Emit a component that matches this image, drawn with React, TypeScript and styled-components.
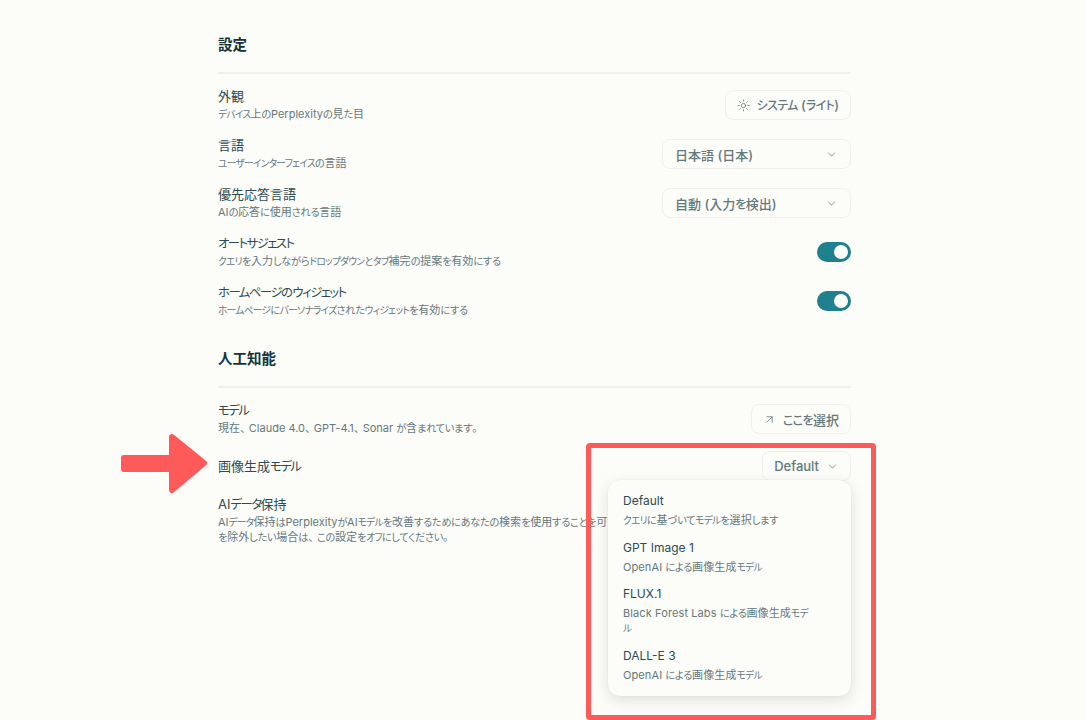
import React from "react"
import styled, { createGlobalStyle } from "styled-components"
import { ArrowUpRight, ChevronDown, Sun } from "lucide-react"

const GlobalStyle = createGlobalStyle`
    html, body {
        margin: 0;
        padding: 0;
        background: #fcfcf9;
    }
    * {
        box-sizing: border-box;
    }
`

const colors = {
    bg: "#fcfcf9",
    title: "#13343b",
    text: "#2e4a50",
    sub: "#64787c",
    line: "#f0f0ec",
    teal: "#20808d",
    red: "#ff5a5a",
}

const Root = styled.div`
    position: relative;
    width: 1085px;
    height: 720px;
    overflow: hidden;
    background: ${colors.bg};
    font-family: Inter, "Noto Sans CJK JP", sans-serif;
    font-feature-settings: "palt";
    padding: 34px 234px 0 218px;
`

const Katakana = styled.span`
    line-height: 1;
    font-size: var(--kana-size, 0.88em);
    letter-spacing: var(--kana, -0.07em);
`

const Hiragana = styled.span`
    line-height: 1;
    font-size: var(--hira-size, 0.93em);
    letter-spacing: var(--hira, -0.03em);
`

const Punct = styled.span`
    font-feature-settings: normal;
    letter-spacing: -0.2em;
`

// the kana of the page's font are much narrower than Noto's, so shrink the runs
const Jp = ({ children }: { children: string }) => (
    <>
        {children.split(/([\u30a0-\u30ff]+|[\u3040-\u309f]+|[、。]+)/).map((part, i) => {
            if (/^[\u30a0-\u30ff]/.test(part)) return <Katakana key={i}>{part}</Katakana>
            if (/^[\u3040-\u309f]/.test(part)) return <Hiragana key={i}>{part}</Hiragana>
            if (/^[、。]/.test(part)) return <Punct key={i}>{part}</Punct>
            return part
        })}
    </>
)

const Section = styled.section`
    margin-bottom: 30px;
`

const SectionTitle = styled.h2`
    margin: 0;
    height: 40px;
    padding-bottom: 17px;
    border-bottom: 2px solid ${colors.line};
    font-size: 14.5px;
    line-height: 22px;
    font-weight: 600;
    color: ${colors.title};
`

const Rows = styled.div`
    display: flex;
    flex-direction: column;
    gap: 15px;
    padding-top: 14px;
`

const Row = styled.div`
    display: flex;
    align-items: center;
    justify-content: space-between;
`

const RowText = styled.div`
    display: flex;
    flex-direction: column;
`

const RowTitle = styled.div`
    --kana-size: 0.95em;
    --kana: -0.12em;
    --hira-size: 0.96em;
    --hira: -0.04em;
    font-size: 13px;
    line-height: 17px;
    color: ${colors.text};
`

const RowSub = styled.div`
    font-size: 11px;
    line-height: 15px;
    margin-top: 2px;
    white-space: nowrap;
    color: ${colors.sub};
`

const Button = styled.div<{ $wide?: boolean }>`
    --kana-size: 0.92em;
    --kana: -0.05em;
    --hira-size: 0.94em;
    --hira: -0.06em;
    display: flex;
    align-items: center;
    justify-content: ${(p) => (p.$wide ? "space-between" : "flex-start")};
    gap: 7px;
    flex-shrink: 0;
    width: ${(p) => (p.$wide ? "189px" : "auto")};
    height: 30px;
    padding: 0 ${(p) => (p.$wide ? "12px" : "11px")};
    background: ${colors.bg};
    border: 1px solid #efefeb;
    border-radius: 8px;
    font-size: 13px;
    font-weight: 500;
    color: ${colors.sub};
`

const Chevron = styled(ChevronDown)`
    color: #b4bcbc;
    flex-shrink: 0;
`

const Toggle = styled.div`
    display: flex;
    align-items: center;
    justify-content: flex-end;
    width: 34px;
    height: 20px;
    padding: 0 3px;
    background: ${colors.teal};
    border-radius: 10px;
`

const Knob = styled.span`
    display: block;
    width: 14px;
    height: 14px;
    background: ${colors.bg};
    border-radius: 50%;
`

const Menu = styled.div`
    position: absolute;
    left: 608px;
    top: 480px;
    width: 243px;
    height: 216px;
    display: flex;
    flex-direction: column;
    padding: 12px 15px 0;
    background: ${colors.bg};
    border-radius: 12px;
    box-shadow: 0 4px 14px rgba(40, 50, 50, 0.14), 0 0 1px rgba(40, 50, 50, 0.12);
`

const MenuItem = styled.div`
    display: flex;
    flex-direction: column;
    margin-bottom: 10.5px;
`

const MenuName = styled.div`
    font-size: 12px;
    line-height: 18px;
    color: ${colors.text};
`

const MenuDesc = styled.div`
    width: 187px;
    margin-top: 3px;
    font-size: 11px;
    line-height: 15px;
    letter-spacing: 0.1px;
    color: ${colors.sub};
`

const Highlight = styled.div`
    position: absolute;
    left: 586px;
    top: 443px;
    width: 290px;
    height: 277px;
    border: 5px solid ${colors.red};
    border-radius: 4px;
    pointer-events: none;
`

const Arrow = styled.svg`
    position: absolute;
    left: 120px;
    top: 433px;
`

const generalRows = [
    { title: "言語", sub: "ユーザーインターフェイスの言語", value: "日本語 (日本)" },
    { title: "優先応答言語", sub: "AIの応答に使用される言語", value: "自動 (入力を検出)" },
]

const toggleRows = [
    { title: "オートサジェスト", sub: "クエリを入力しながらドロップダウンとタブ補完の提案を有効にする" },
    { title: "ホームページのウィジェット", sub: "ホームページにパーソナライズされたウィジェットを有効にする" },
]

const menuItems = [
    { name: "Default", desc: "クエリに基づいてモデルを選択します" },
    { name: "GPT Image 1", desc: "OpenAI による画像生成モデル" },
    { name: "FLUX.1", desc: "Black Forest Labs による画像生成モデル" },
    { name: "DALL-E 3", desc: "OpenAI による画像生成モデル" },
]

const App = () => {
    return (
        <Root>
            <GlobalStyle />
            <Section>
                <SectionTitle>設定</SectionTitle>
                <Rows>
                    <Row>
                        <RowText>
                            <RowTitle>外観</RowTitle>
                            <RowSub><Jp>デバイス上のPerplexityの見た目</Jp></RowSub>
                        </RowText>
                        <Button>
                            <Sun size={13} strokeWidth={1.5} />
                            <span><Jp>システム (ライト)</Jp></span>
                        </Button>
                    </Row>
                    {generalRows.map((row) => (
                        <Row key={row.title}>
                            <RowText>
                                <RowTitle>{row.title}</RowTitle>
                                <RowSub><Jp>{row.sub}</Jp></RowSub>
                            </RowText>
                            <Button $wide>
                                <span><Jp>{row.value}</Jp></span>
                                <Chevron size={13} />
                            </Button>
                        </Row>
                    ))}
                    {toggleRows.map((row) => (
                        <Row key={row.title}>
                            <RowText>
                                <RowTitle><Jp>{row.title}</Jp></RowTitle>
                                <RowSub><Jp>{row.sub}</Jp></RowSub>
                            </RowText>
                            <Toggle>
                                <Knob />
                            </Toggle>
                        </Row>
                    ))}
                </Rows>
            </Section>
            <Section>
                <SectionTitle>人工知能</SectionTitle>
                <Rows>
                    <Row>
                        <RowText>
                            <RowTitle><Jp>モデル</Jp></RowTitle>
                            <RowSub><Jp>現在、Claude 4.0、GPT-4.1、Sonar が含まれています。</Jp></RowSub>
                        </RowText>
                        <Button>
                            <ArrowUpRight size={13} strokeWidth={1.5} />
                            <span><Jp>ここを選択</Jp></span>
                        </Button>
                    </Row>
                    <Row>
                        <RowTitle><Jp>画像生成モデル</Jp></RowTitle>
                        <Button>
                            Default
                            <Chevron size={13} />
                        </Button>
                    </Row>
                    <Row>
                        <RowText>
                            <RowTitle><Jp>AIデータ保持</Jp></RowTitle>
                            <RowSub>
                                <Jp>AIデータ保持はPerplexityがAIモデルを改善するためにあなたの検索を使用することを可能にします。検索</Jp>
                                <br />
                                <Jp>を除外したい場合は、この設定をオフにしてください。</Jp>
                            </RowSub>
                        </RowText>
                    </Row>
                </Rows>
            </Section>
            <Menu>
                {menuItems.map((item) => (
                    <MenuItem key={item.name}>
                        <MenuName>{item.name}</MenuName>
                        <MenuDesc><Jp>{item.desc}</Jp></MenuDesc>
                    </MenuItem>
                ))}
            </Menu>
            <Highlight />
            <Arrow width="88" height="62" viewBox="0 0 88 62">
                <path
                    d="M4 25H52V4L84 30L52 57V36H4Z"
                    fill={colors.red}
                    stroke={colors.red}
                    strokeWidth="6"
                    strokeLinejoin="round"
                />
            </Arrow>
        </Root>
    )
}

export default App
